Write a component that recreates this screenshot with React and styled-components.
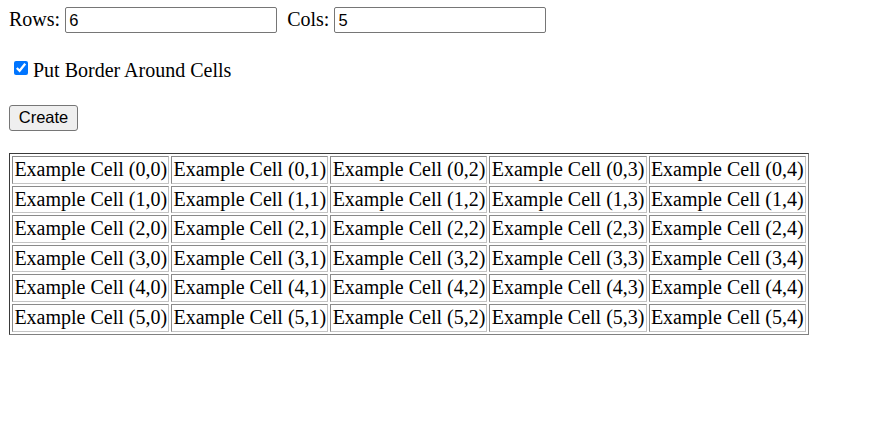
import { useState } from "react";
import styled, { createGlobalStyle } from "styled-components";

const GlobalStyle = createGlobalStyle`
  body {
    margin: 0;
    background: #ffffff;
    color: #000000;
    font-family: "Liberation Serif", "Times New Roman", serif;
    font-size: 20px;
  }
`;

function montarTabela(linhas, colunas) {
  const tabela = [];
  for (let i = 0; i < linhas; i++) {
    const linha = [];
    for (let j = 0; j < colunas; j++) {
      linha.push(`Example Cell (${i},${j})`);
    }
    tabela.push(linha);
  }
  return tabela;
}

export default function App() {
  const [linhas, setLinhas] = useState("6");
  const [colunas, setColunas] = useState("5");
  const [comBorda, setComBorda] = useState(true);
  const [tabela, setTabela] = useState(montarTabela(6, 5));

  function criar() {
    const l = parseInt(linhas, 10) || 0;
    const c = parseInt(colunas, 10) || 0;
    setTabela(montarTabela(l, c));
  }

  return (
    <>
      <GlobalStyle />
      <Pagina>
        <LinhaCampos>
          <Rotulo>Rows:</Rotulo>
          <Campo value={linhas} onChange={(e) => setLinhas(e.target.value)} />
          <Rotulo $afastado>Cols:</Rotulo>
          <Campo value={colunas} onChange={(e) => setColunas(e.target.value)} />
        </LinhaCampos>

        <LinhaCheck>
          <Caixa
            type="checkbox"
            checked={comBorda}
            onChange={(e) => setComBorda(e.target.checked)}
          />
          <span>Put Border Around Cells</span>
        </LinhaCheck>

        <Botao onClick={criar}>Create</Botao>

        <Tabela $borda={comBorda}>
          <tbody>
            {tabela.map((linha, i) => (
              <tr key={i}>
                {linha.map((texto, j) => (
                  <Celula key={j} $borda={comBorda}>
                    {texto}
                  </Celula>
                ))}
              </tr>
            ))}
          </tbody>
        </Tabela>
      </Pagina>
    </>
  );
}

const Pagina = styled.div`
  padding: 7px 9px;
  display: flex;
  flex-direction: column;
  align-items: flex-start;
`;

const LinhaCampos = styled.div`
  display: flex;
  align-items: baseline;
`;

const Rotulo = styled.label`
  margin-left: ${(p) => (p.$afastado ? "10px" : "0")};
  margin-right: 5px;
  line-height: 23px;
`;

const Campo = styled.input`
  box-sizing: border-box;
  width: 212px;
  height: 26px;
  padding: 0 3px;
  border: 1px solid #767676;
  border-radius: 2px;
  font-family: "Liberation Sans", Arial, sans-serif;
  font-size: 16.5px;
  color: #000;
  background: #fff;
`;

const LinhaCheck = styled.div`
  display: flex;
  align-items: flex-start;
  height: 22px;
  line-height: 21px;
  margin-top: 27px;
`;

const Caixa = styled.input`
  width: 14px;
  height: 14px;
  margin: 1px 5px 0 5px;
  accent-color: #0075ff;
`;

const Botao = styled.button`
  box-sizing: border-box;
  margin-top: 23px;
  width: 69px;
  height: 26px;
  padding: 0 8px 1px;
  border: 1px solid #767676;
  border-radius: 3px;
  background: #efefef;
  font-family: "Liberation Sans", Arial, sans-serif;
  font-size: 16.5px;
  color: #000;
`;

const Tabela = styled.table`
  margin-top: 22px;
  border-spacing: 2px;
  border: ${(p) => (p.$borda ? "1px solid" : "none")};
  border-color: #3a3a3a #808080 #808080 #3a3a3a;
`;

const Celula = styled.td`
  padding: 1px 1px 1px 1.4px;
  line-height: 23.6px;
  white-space: nowrap;
  border: ${(p) => (p.$borda ? "1px solid" : "none")};
  border-color: #8a8a8a #c4c4c4 #c4c4c4 #8a8a8a;
`;
